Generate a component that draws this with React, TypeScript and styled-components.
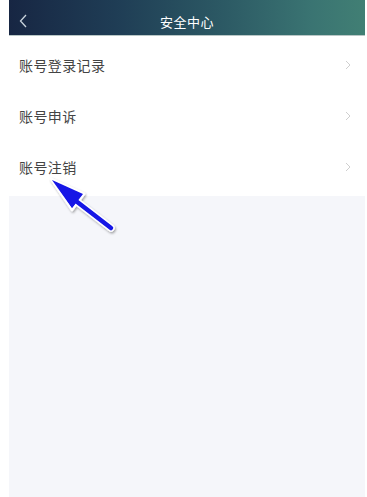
import React from "react";
import styled, { createGlobalStyle } from "styled-components";

const GlobalStyle = createGlobalStyle`
    html, body {
        margin: 0;
        padding: 0;
        background: #ffffff;
    }
    body {
        font-family: "Noto Sans CJK SC", "Noto Sans", sans-serif;
    }
`;

const Page = styled.div`
    position: relative;
    width: 367px;
    height: 497px;
    padding: 0 2px 0 9px;
    box-sizing: border-box;
    background: #ffffff;
    overflow: hidden;
`;

const Screen = styled.div`
    display: flex;
    flex-direction: column;
    height: 100%;
    background: #f5f6fa;
`;

const Header = styled.header`
    position: relative;
    display: flex;
    align-items: center;
    justify-content: center;
    height: 36px;
    padding-top: 8px;
    box-sizing: border-box;
    flex-shrink: 0;
    background: linear-gradient(90deg, #172643 0%, #1f3d55 30%, #2c5964 60%, #3a7472 85%, #417f74 100%);
    border-bottom: 1px solid #b9c7c6;
`;

const BackButton = styled.button`
    position: absolute;
    left: 10px;
    top: 14px;
    display: flex;
    align-items: center;
    padding: 0;
    border: none;
    background: none;
    color: #c9d3dc;
`;

const Title = styled.h1`
    margin: 0;
    font-size: 13px;
    font-weight: 400;
    color: #ffffff;
    letter-spacing: 0.5px;
`;

const List = styled.ul`
    list-style: none;
    margin: 0;
    padding: 3px 0 4px;
    background: #ffffff;
`;

const Row = styled.li`
    display: flex;
    align-items: center;
    justify-content: space-between;
    height: 51px;
    padding: 0 14px 0 10px;
`;

const Label = styled.span`
    font-size: 14px;
    letter-spacing: 0.4px;
    color: #444444;
`;

const Annotation = styled.svg`
    position: absolute;
    left: 0;
    top: 0;
    pointer-events: none;
`;

const items = ["账号登录记录", "账号申诉", "账号注销"];

const Chevron = () => (
    <svg width="6" height="10" viewBox="0 0 6 10" fill="none">
        <path d="M1 1l4 4-4 4" stroke="#cfcfcf" strokeWidth="1" />
    </svg>
);

const App = () => {
    return (
        <Page>
            <GlobalStyle />
            <Screen>
                <Header>
                    <BackButton aria-label="back">
                        <svg width="8" height="14" viewBox="0 0 8 14" fill="none">
                            <path d="M7 1L1.5 7 7 13" stroke="currentColor" strokeWidth="1.3" />
                        </svg>
                    </BackButton>
                    <Title>安全中心</Title>
                </Header>
                <List>
                    {items.map((item) => (
                        <Row key={item}>
                            <Label>{item}</Label>
                            <Chevron />
                        </Row>
                    ))}
                </List>
            </Screen>
            <Annotation width="367" height="497" viewBox="0 0 367 497">
                <defs>
                    <filter id="shadow" x="-20%" y="-20%" width="140%" height="140%">
                        <feDropShadow dx="1" dy="1.5" stdDeviation="1.2" floodColor="#000" floodOpacity="0.35" />
                    </filter>
                </defs>
                <g filter="url(#shadow)">
                    <line x1="76" y1="201" x2="111" y2="228" stroke="#ffffff" strokeWidth="7.5" strokeLinecap="round" />
                    <polygon points="51,179 84,194 72,210" fill="#1414e6" stroke="#ffffff" strokeWidth="2.5" strokeLinejoin="round" />
                    <line x1="76" y1="201" x2="111" y2="228" stroke="#1414e6" strokeWidth="4.5" strokeLinecap="round" />
                    <polygon points="52,180 83,194 72,208" fill="#1414e6" />
                </g>
            </Annotation>
        </Page>
    );
};

export default App;
